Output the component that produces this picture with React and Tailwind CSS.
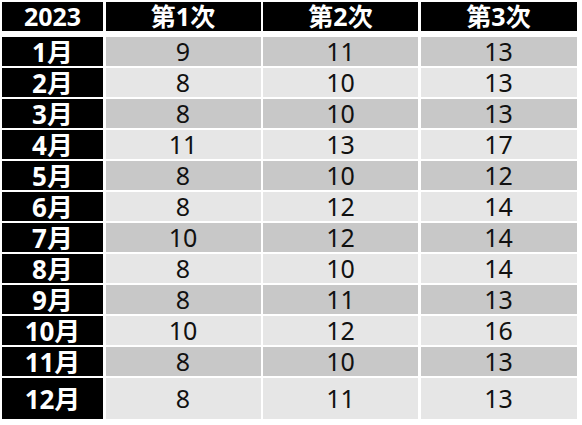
const rows = [
  ['1月', 9, 11, 13],
  ['2月', 8, 10, 13],
  ['3月', 8, 10, 13],
  ['4月', 11, 13, 17],
  ['5月', 8, 10, 12],
  ['6月', 8, 12, 14],
  ['7月', 10, 12, 14],
  ['8月', 8, 10, 14],
  ['9月', 8, 11, 13],
  ['10月', 10, 12, 16],
  ['11月', 8, 10, 13],
  ['12月', 8, 11, 13],
];

export default function App() {
  return (
    <div
      className="w-[582px] h-[425px] bg-white pl-[2px] pt-[2px]"
      style={{ fontFamily: '"Noto Sans", "Noto Sans CJK JP", sans-serif' }}
    >
      <div className="grid grid-cols-[101px_155px_155px_156px] gap-x-[2.5px]">
        {['2023', '第1次', '第2次', '第3次'].map((h) => (
          <div
            key={h}
            className="h-[29px] bg-black text-white font-bold text-[25px] leading-none flex items-center justify-center mb-[6px]"
          >
            {h}
          </div>
        ))}
      </div>
      <div className="flex flex-col gap-y-[2px]">
        {rows.map((r, i) => {
          const bg = i % 2 === 0 && i !== 11 ? 'bg-[#c8c8c8]' : 'bg-[#e6e6e6]';
          const h = i === 11 ? 'h-[41px]' : 'h-[29px]';
          return (
            <div key={r[0]} className="grid grid-cols-[101px_155px_155px_156px] gap-x-[2.5px]">
              <div className={`${h} bg-black text-white font-bold text-[26px] leading-none flex items-center justify-center`}>
                {r[0]}
              </div>
              {r.slice(1).map((v, j) => (
                <div
                  key={j}
                  className={`${h} ${bg} text-[#111] text-[25px] leading-none flex items-center justify-center`}
                >
                  {v}
                </div>
              ))}
            </div>
          );
        })}
      </div>
    </div>
  );
}
